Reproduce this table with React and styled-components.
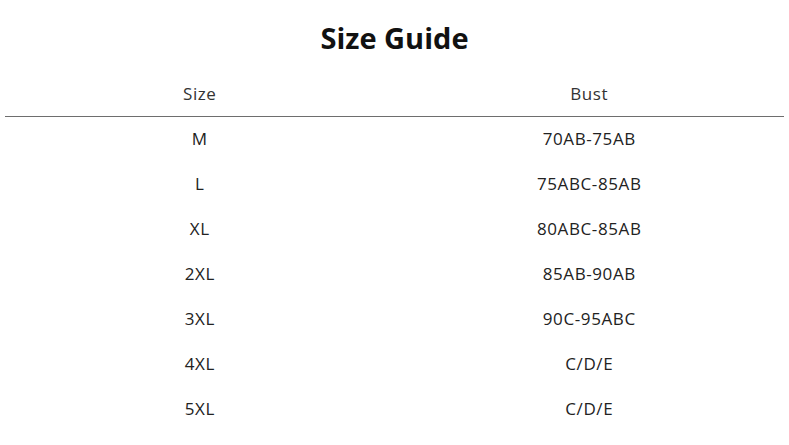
import React from "react";
import styled, { createGlobalStyle } from "styled-components";

const Global = createGlobalStyle`
  html, body { margin: 0; padding: 0; background: #fff; }
  body { font-family: "Open Sans", "Noto Sans", sans-serif; color: #222; }
`;

const Page = styled.div`
  width: 789px;
  height: 445px;
  overflow: hidden;
  background: #fff;
`;

const Title = styled.h1`
  margin: 0;
  padding-top: 18px;
  height: 40px;
  line-height: 40px;
  text-align: center;
  font-size: 29px;
  font-weight: 700;
  color: #111;
`;

const Table = styled.div`
  margin: 14px 0 0 5px;
  width: 779px;
`;

const Row = styled.div`
  display: grid;
  grid-template-columns: 1fr 1fr;
  height: ${(p) => (p.$head ? "44px" : "45px")};
  align-items: center;
  border-bottom: ${(p) => (p.$head ? "1px solid #6e6e6e" : "none")};
`;

const Cell = styled.div`
  text-align: center;
  font-size: 17px;
  letter-spacing: 0.6px;
  color: ${(p) => (p.$head ? "#333" : "#222")};
  padding-bottom: ${(p) => (p.$head ? "2px" : "3px")};
`;

const rows = [
  ["M", "70AB-75AB"],
  ["L", "75ABC-85AB"],
  ["XL", "80ABC-85AB"],
  ["2XL", "85AB-90AB"],
  ["3XL", "90C-95ABC"],
  ["4XL", "C/D/E"],
  ["5XL", "C/D/E"],
];

export default function App() {
  return (
    <Page>
      <Global />
      <Title>Size Guide</Title>
      <Table>
        <Row $head>
          <Cell $head>Size</Cell>
          <Cell $head>Bust</Cell>
        </Row>
        {rows.map(([s, b]) => (
          <Row key={s}>
            <Cell>{s}</Cell>
            <Cell>{b}</Cell>
          </Row>
        ))}
      </Table>
    </Page>
  );
}
